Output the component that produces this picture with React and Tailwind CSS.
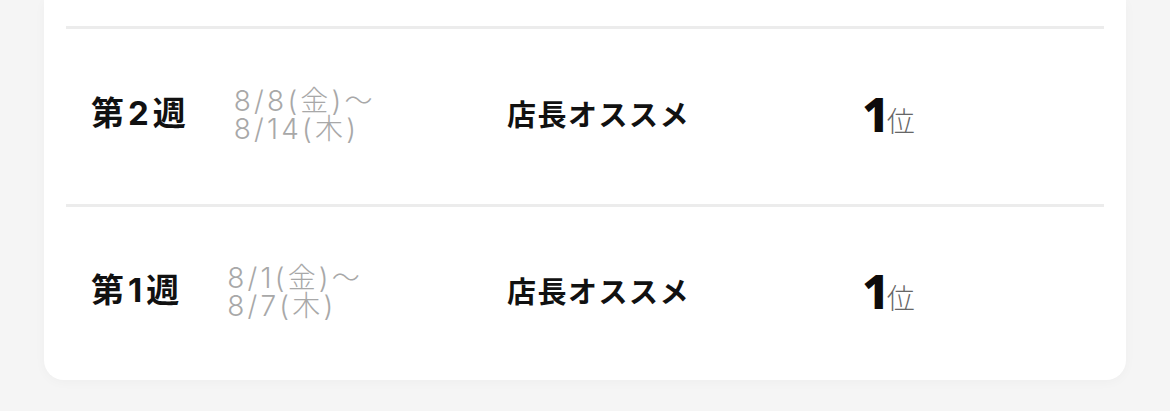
export default function App() {
  const rows = [
    { week: "第2週", d1: "8/8(金)〜", d2: "8/14(木)", title: "店長オススメ", rank: "1" },
    { week: "第1週", d1: "8/1(金)〜", d2: "8/7(木)", title: "店長オススメ", rank: "1" },
  ];
  const latinCjk = { fontFamily: 'Inter, "Noto Sans CJK JP", sans-serif' };
  return (
    <div
      className="w-[1170px] h-[411px] bg-[#f5f5f5] overflow-hidden"
      style={{ fontFamily: '"Noto Sans CJK JP", "Noto Sans", sans-serif' }}
    >
      <div className="mx-[44px] bg-white rounded-b-[20px] px-[22px] pt-[26px] shadow-[0_2px_12px_rgba(0,0,0,0.03)]">
        {rows.map((r, i) => (
          <div
            key={i}
            className={`flex items-center border-t-[3px] border-[#ececec] pl-[25px] pb-[6px] ${i === 0 ? "h-[178px]" : "h-[176px]"}`}
          >
            <div className="w-[416px] flex items-center">
              <div className="text-[33px] font-bold text-[#111] tracking-[4px] leading-none" style={latinCjk}>
                {r.week}
              </div>
              <div
                className="ml-[44px] text-[28px] font-light text-[#a8a8a8] tracking-[3.2px] leading-[28px] mt-[2px]"
                style={latinCjk}
              >
                <div>{r.d1}</div>
                <div>{r.d2}</div>
              </div>
            </div>
            <div className="w-[355px] text-[29px] font-bold text-[#111] tracking-[1.5px] leading-none">{r.title}</div>
            <div className="flex items-baseline leading-none">
              <span
                className="text-[48px] font-extrabold text-[#0d0b0b] tracking-[-3px]"
                style={{ fontFamily: '"Noto Sans", sans-serif' }}
              >
                {r.rank}
              </span>
              <span className="text-[28px] font-light text-[#666]">位</span>
            </div>
          </div>
        ))}
      </div>
    </div>
  );
}
